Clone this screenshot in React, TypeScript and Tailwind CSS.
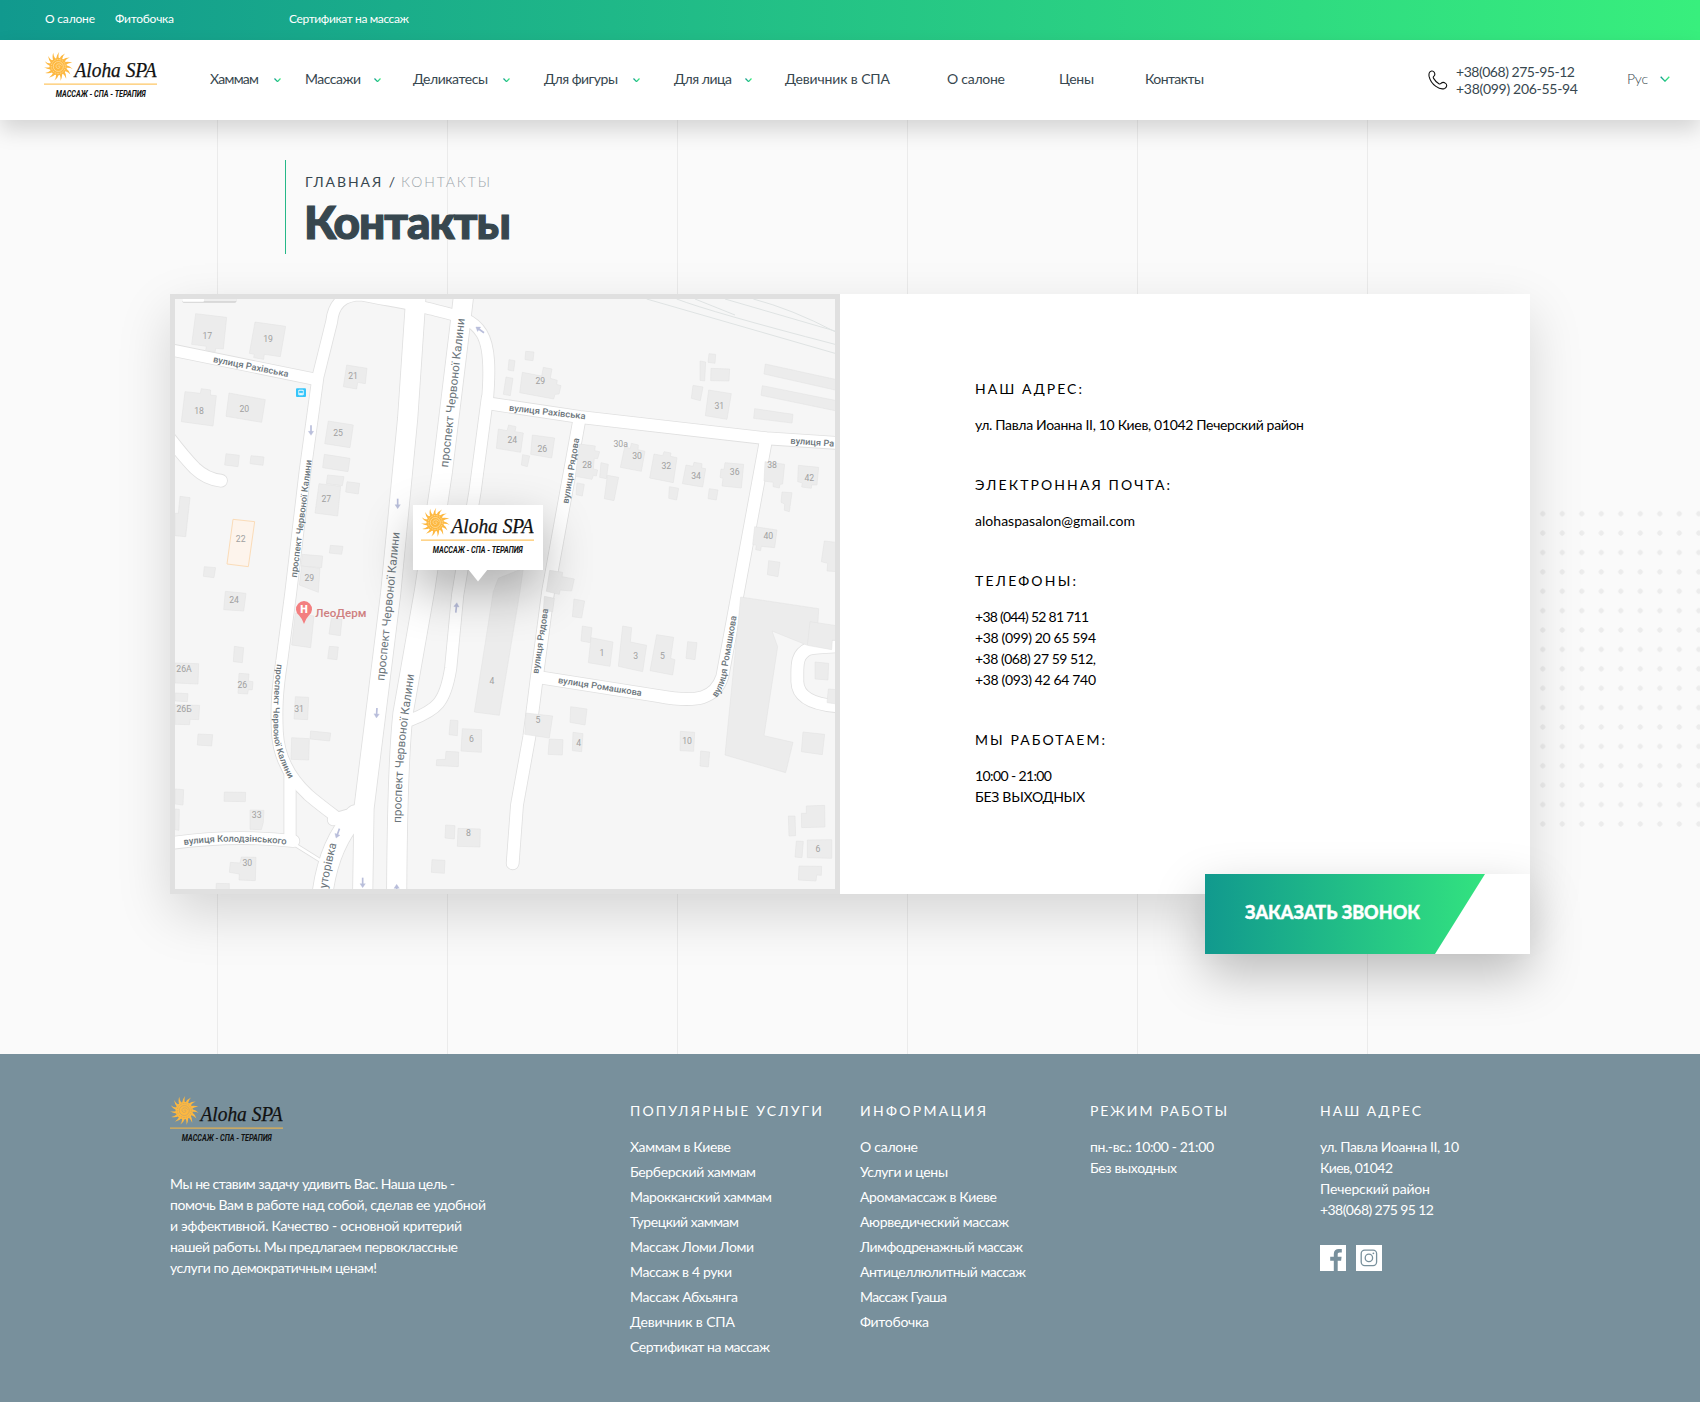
import { useLayoutEffect, useRef, useState } from "react";

/* Text set to a given measure: the tracking is computed from the natural width. */
function Fit({ w, children, className = "" }: { w: number; children: string; className?: string }) {
  const ref = useRef<HTMLSpanElement>(null);
  const [tracking, setTracking] = useState(0);
  useLayoutEffect(() => {
    const el = ref.current;
    if (!el) return;
    const natural = el.getBoundingClientRect().width - tracking * children.length;
    setTracking((w - natural) / Math.max(1, children.length - 1));
  }, [w, children]);
  return (
    <span className={`inline-block whitespace-nowrap ${className}`} style={{ width: w }}>
      <span ref={ref} style={{ letterSpacing: tracking }}>
        {children}
      </span>
    </span>
  );
}

function sunRays() {
  const n = 15;
  const pt = (r: number, a: number) =>
    `${(14.3 + r * Math.cos(a)).toFixed(2)} ${(14.5 + r * Math.sin(a)).toFixed(2)}`;
  let d = "";
  for (let i = 0; i < n; i++) {
    const a = (i / n) * Math.PI * 2;
    const s = (Math.PI * 2) / n;
    d += `M${pt(8.2, a - s * 0.38)}Q${pt(11.4, a - s * 0.16)} ${pt(14.6, a + s * 0.4)}Q${pt(11.4, a + s * 0.2)} ${pt(8.2, a + s * 0.38)}Z`;
  }
  return d;
}
const RAYS = sunRays();

function Logo({ etch = "#ffe2ab" }: { etch?: string }) {
  return (
    <svg width="113" height="50" viewBox="0 0 113 50" className="block shrink-0">
      <path d={RAYS} fill="#fdb840" />
      <circle cx="14.3" cy="14.5" r="8.7" fill="#fdb840" />
      <g fill="none" stroke={etch} strokeWidth="0.7">
        <circle cx="14.3" cy="14.5" r="7" strokeDasharray="1.6 1" />
        <circle cx="14.3" cy="14.5" r="5" />
        <path d="M14.3 14.5c0-1 1.5-.8 1.6.3.1 1.400-1.400 2-2.600 1.500-1.600-.7-1.700-2.900-.4-3.900 1.600-1.100 3.900-.6 4.700 1.200" />
      </g>
      <text x="30.500" y="25" textLength="82" lengthAdjust="spacingAndGlyphs" fill="#111" stroke="#111" strokeWidth="0.250" fontSize="20" fontStyle="italic" fontFamily="Liberation Serif, serif">
        Aloha SPA
      </text>
      <rect x="0" y="31.600" width="113" height="1" fill="#fdb840" />
      <text x="11.800" y="45" textLength="90" lengthAdjust="spacingAndGlyphs" fill="#111" fontSize="8.800" fontWeight="700" fontStyle="italic" fontFamily="Roboto, sans-serif">
        МАССАЖ - СПА - ТЕРАПИЯ
      </text>
    </svg>
  );
}

function Chevron({ size = 7, className = "" }: { size?: number; className?: string }) {
  return (
    <svg width={size} height={size * 0.62} viewBox="0 0 10 6.200" className={`block ${className}`}>
      <defs>
        <linearGradient id="chev" x1="0" x2="1" y1="0" y2="0">
          <stop offset="0" stopColor="#11998e" />
          <stop offset="1" stopColor="#38ef7d" />
        </linearGradient>
      </defs>
      <path d="M.7.7 5 5.200 9.300.7" fill="none" stroke="url(#chev)" strokeWidth={size > 8 ? 1.3 : 1.8} />
    </svg>
  );
}

const NAV = [
  { t: "Хаммам", w: 49, cell: "w-[95px]", gap: "ml-[15px]" },
  { t: "Массажи", w: 56, cell: "w-[108px]", gap: "ml-[13px]" },
  { t: "Деликатесы", w: 75, cell: "w-[131px]", gap: "ml-[15px]" },
  { t: "Для фигуры", w: 74, cell: "w-[130px]", gap: "ml-[15px]" },
  { t: "Для лица", w: 58, cell: "w-[111px]", gap: "ml-[13px]" },
  { t: "Девичник в СПА", w: 105, cell: "w-[162px]", gap: "" },
  { t: "О салоне", w: 58, cell: "w-[112px]", gap: "" },
  { t: "Цены", w: 35, cell: "w-[86px]", gap: "" },
  { t: "Контакты", w: 59, cell: "w-[60px]", gap: "" },
];

function TopBar() {
  return (
    <div className="flex h-10 bg-[linear-gradient(to_right,#11998e,#38ef7d)] pl-[45px] pt-[9px] text-[12px] leading-[20px] text-white">
      <Fit w={50}>О салоне</Fit>
      <Fit w={59} className="ml-5">Фитобочка</Fit>
      <Fit w={120} className="ml-[115px]">Сертификат на массаж</Fit>
    </div>
  );
}

function Header() {
  return (
    <header className="relative z-10 flex h-20 bg-white text-[14px] text-[#37474f] shadow-[0_10px_20px_rgba(0,0,0,0.15)]">
      <div className="w-[210px] pl-[44px] pt-3">
        <Logo />
      </div>
      <nav className="flex pt-7 leading-[21px]">
        {NAV.map((n) => (
          <div key={n.t} className={`flex h-[21px] items-center ${n.cell}`}>
            <Fit w={n.w}>{n.t}</Fit>
            {n.gap && <Chevron className={`mt-[3px] ${n.gap}`} />}
          </div>
        ))}
      </nav>
      <div className="ml-auto flex">
        <svg width="20" height="20" viewBox="0 0 20 20" className="mt-[30px]">
          <path
            d="M1.300 2.900C2.100.7 5 .2 6.200 2.200c.8 1.300.9 2.800-.3 3.900-.8.700-.8 1.400-.3 2.300 1.300 2.200 3 4 5.300 5.300.9.500 1.500.3 2.100-.3 1.200-1.200 2.900-1.300 4.300-.3 2.100 1.400 1.700 4.300-.6 5.300-2.500 1-5.600.3-8.800-2C4.300 13.800 1.900 10.300 1.100 6.400c-.2-1.200-.2-2.400.2-3.500Z"
            fill="none"
            stroke="#111"
            strokeWidth="1.100"
          />
        </svg>
        <div className="ml-2 mt-[23px] flex flex-col leading-[17px]">
          <Fit w={119}>+38(068) 275-95-12</Fit>
          <Fit w={122}>+38(099) 206-55-94</Fit>
        </div>
        <Fit w={21} className="ml-[49px] mt-7 font-light leading-[21px]">Рус</Fit>
        <Chevron size={10} className="ml-3 mr-[30px] mt-[36px]" />
      </div>
    </header>
  );
}

/* Roads as centre lines: [path, width] */
const ROADS: [string, number][] = [
  ["M20 195 452 283", 34],
  ["M967 350C975 260 975 185 950 145C920 95 860 88 780 68C720 52 660 45 590 30C530 30 505 60 500 110L459 275L420 560L377 925L350 1130C336 1220 334 1270 337 1340C340 1400 365 1470 430 1530C460 1556 490 1578 522 1602", 33],
  ["M375 1470V1664", 34],
  ["M20 1674Q210 1648 385 1668", 36],
  ["M385 1676 462 1724", 8],
  ["M505 1604Q540 1592 590 1580", 34],
  ["M572 1590Q490 1680 472 1830", 60],
  ["M753 30 728 400 677 925 597 1570 593 1830", 58],
  ["M896 30 883 140 832 560 779 915 714 1285Q697 1440 695 1830", 58],
  ["M967 340 930 620 878 930 857 1150Q845 1225 820 1255Q800 1280 735 1306", 34],
  ["M970 355 1245 396 1805 460 2020 474", 36],
  ["M1242 410 1150 915 1117 1165 1093 1355 1056 1560 1043 1735", 36],
  ["M1118 1176 1480 1233C1600 1255 1650 1240 1672 1175L1720 915 1802 470", 36],
  ["M2020 1084Q1950 1086 1930 1092C1890 1110 1898 1150 1897 1190C1898 1230 1930 1258 2020 1264", 36],
  ["M10 455Q60 520 90 550Q125 583 168 587", 36],
];

const BUILDINGS = [
  "92,86 185,97 175,192 152,190 150,202 122,196 124,184 80,178",
  "270,111 362,124 346,215 298,208 296,223 266,218 268,208 253,205",
  "545,240 606,250 601,296 578,292 575,312 535,305",
  "60,320 106,325 109,311 137,315 136,330 154,332 144,423 49,410",
  "192,324 301,344 290,412 183,394",
  "490,408 565,420 555,488 479,476",
  "478,508 555,520 549,560 473,548",
  "488,570 537,575 532,602 484,596",
  "462,596 527,604 518,693 450,684",
  "546,590 584,595 580,627 542,621",
  "183,506 223,511 219,545 179,540",
  "258,512 297,516 294,541 255,536",
  "45,634 75,638 62,755 30,752 30,685 40,685",
  "118,845 152,848 147,878 115,874",
  "496,781 534,784 530,808 493,804",
  "412,808 473,813 470,848 408,843",
  "410,843 465,850 460,922 403,900",
  "1000,432 1026,437 1031,420 1053,425 1050,440 1075,444 1067,502 994,490",
  "1082,199 1107,201 1104,227 1080,224",
  "1032,224 1050,227 1046,258 1029,255",
  "1023,276 1044,280 1036,332 1015,328",
  "1072,262 1130,273 1135,247 1161,252 1156,280 1177,286 1175,298 1188,302 1182,327 1170,328 1166,342 1064,323",
  "1102,450 1169,459 1160,519 1097,508",
  "1073,509 1094,513 1087,545 1069,540",
  "1243,477 1291,483 1289,497 1304,500 1298,521 1288,520 1285,552 1298,555 1294,573 1285,571 1281,583 1231,574",
  "1308,533 1330,538 1324,581 1304,577",
  "1327,571 1361,577 1347,647 1318,641",
  "1236,594 1258,598 1252,633 1233,629",
  "1379,486 1396,490 1399,475 1420,480 1419,494 1440,499 1429,559 1366,547",
  "1467,507 1493,512 1497,500 1518,504 1516,514 1536,518 1525,593 1454,579",
  "1563,540 1584,544 1587,532 1611,536 1610,549 1622,551 1613,606 1552,596",
  "1680,533 1736,538 1729,609 1671,603 1674,580 1665,577 1668,552 1677,553",
  "1513,605 1541,610 1535,645 1511,640",
  "1633,611 1659,615 1654,645 1629,641",
  "1632,206 1652,208 1650,235 1629,232",
  "1605,228 1622,231 1619,288 1605,286",
  "1638,250 1694,252 1692,288 1637,287",
  "1584,301 1614,306 1606,347 1579,340",
  "1631,315 1699,326 1686,403 1621,392",
  "1801,237 2015,284 2015,316 1797,267",
  "1792,302 2015,347 2015,378 1788,331",
  "1769,371 1884,388 1881,414 1766,400",
  "1800,530 1859,538 1853,597 1845,598 1843,609 1824,605 1825,592 1797,588",
  "1900,541 1961,547 1956,600 1940,600 1939,610 1910,606 1912,594 1898,590",
  "1851,621 1881,623 1875,665 1873,680 1858,676 1859,657 1848,652",
  "1769,725 1836,735 1829,788 1789,784 1787,797 1772,794 1774,781 1763,778",
  "1811,827 1845,832 1839,875 1807,869",
  "1978,768 2015,772 2015,860 1986,858 1988,835 1969,830",
  "1154,856 1193,862 1191,875 1228,882 1220,918 1185,915 1183,928 1144,919",
  "181,919 243,925 236,978 176,974",
  "208,1084 236,1088 232,1133 205,1130",
  "30,1134 101,1136 99,1197 30,1194",
  "30,1224 69,1226 67,1250 30,1248",
  "30,1259 104,1261 101,1304 75,1303 74,1319 30,1318",
  "222,1165 252,1167 250,1188 264,1190 262,1214 250,1214 248,1227 219,1225",
  "99,1347 143,1349 140,1383 97,1380",
  "391,985 447,993 437,1088 380,1080",
  "499,1000 531,1003 526,1052 492,1047",
  "493,1084 520,1086 516,1124 488,1121",
  "391,1235 431,1237 428,1304 387,1302",
  "437,1338 497,1344 494,1368 435,1362",
  "380,1358 433,1361 431,1425 378,1423",
  "30,1512 56,1514 54,1560 30,1557",
  "30,1572 43,1573 42,1636 30,1634",
  "178,1521 242,1522 241,1550 177,1549",
  "255,1575 297,1576 295,1612 289,1634 255,1633",
  "196,1732 225,1734 229,1716 273,1717 271,1787 222,1785 223,1767 193,1762",
  "154,1795 193,1796 193,1815 153,1815",
  "856,1305 879,1307 877,1352 852,1349",
  "892,1331 950,1334 949,1402 888,1398",
  "843,1399 881,1401 880,1445 840,1443 814,1442 815,1424 841,1423",
  "842,1620 870,1622 868,1662 840,1659",
  "879,1630 946,1632 945,1686 877,1684",
  "801,1724 840,1726 838,1765 799,1762",
  "1000,880 1075,850 1064,925 1003,1291 928,1281 985,920",
  "1138,934 1168,940 1163,980 1135,976",
  "1227,942 1259,948 1250,999 1222,995",
  "1252,1023 1281,1028 1276,1073 1248,1068",
  "1278,1058 1344,1071 1335,1144 1270,1133",
  "1373,1023 1400,1028 1396,1071 1445,1081 1433,1160 1360,1144",
  "1475,1049 1526,1057 1517,1120 1530,1124 1523,1170 1455,1157",
  "1568,1070 1596,1073 1590,1124 1563,1120",
  "1083,1284 1163,1293 1153,1359 1079,1348",
  "1217,1265 1266,1272 1260,1320 1215,1312",
  "1224,1342 1254,1346 1250,1400 1222,1397",
  "1153,1362 1194,1364 1192,1410 1149,1408",
  "1546,1339 1589,1342 1586,1399 1545,1397",
  "1607,1398 1634,1401 1630,1446 1605,1443",
  "1727,936 1961,971 1956,1062 1925,1080 1821,1038 1838,1085 1797,1352 1884,1372 1862,1463 1680,1410",
  "1935,1010 2015,1022 2015,1066 2002,1065 2000,1094 1927,1081",
  "1950,1131 1991,1135 1989,1185 1950,1182",
  "1990,1212 2015,1214 2015,1257 1986,1253",
  "1914,1341 1979,1348 1972,1409 1909,1400",
  "1924,1563 1979,1561 1980,1626 1910,1628 1909,1585 1924,1585",
  "1870,1593 1890,1593 1892,1652 1872,1653",
  "1894,1668 1915,1669 1911,1718 1890,1716",
  "1927,1665 2000,1664 2000,1720 1927,1718",
  "1902,1743 1970,1744 1969,1771 1955,1770 1953,1788 1900,1785",
];

const NUMBERS: [number, number, string][] = [
  [127, 162, "17"], [309, 170, "19"], [564, 282, "21"], [102, 387, "18"], [238, 382, "20"],
  [519, 452, "25"], [484, 650, "27"], [227, 770, "22"], [433, 887, "29"], [1042, 473, "24"],
  [1126, 298, "29"], [1132, 502, "26"], [1266, 549, "28"], [1367, 487, "30a"], [1416, 523, "30"],
  [1504, 552, "32"], [1593, 583, "34"], [1709, 570, "36"], [1821, 548, "38"], [1933, 587, "42"],
  [1663, 371, "31"], [1810, 762, "40"], [207, 953, "24"], [57, 1160, "26A"], [57, 1282, "26Б"],
  [232, 1210, "26"], [402, 1281, "31"], [275, 1600, "33"], [247, 1744, "30"], [981, 1197, "4"],
  [919, 1372, "6"], [910, 1653, "8"], [1311, 1113, "1"], [1412, 1122, "3"], [1492, 1122, "5"],
  [1119, 1315, "5"], [1241, 1384, "4"], [1566, 1377, "10"], [1959, 1700, "6"],
];

const ARROWS: [number, number, number][] = [
  [438, 437, 0], [698, 657, 0], [635, 1285, 3], [518, 1646, 20], [593, 1794, 0],
  [874, 967, 186], [695, 1812, 180], [944, 134, 125],
];

function StreetMap() {
  return (
    <svg viewBox="30 42 1980 1770" className="block h-[590px] w-[660px]" fontFamily="Roboto, sans-serif">
      <rect x="30" y="42" width="1980" height="1770" fill="#f6f6f6" />
      <g fill="none" stroke="#dfe3e3" strokeWidth="3">
        <path d="M1445 42 2010 205M1535 42Q1640 82 2010 178M1590 42 1710 90M1680 42 2010 138M1765 42Q1880 72 2010 140" />
      </g>
      <g fill="none" stroke="#e0e0e0" strokeLinecap="round" strokeLinejoin="round">
        {ROADS.map(([d, w]) => <path key={d} d={d} strokeWidth={w + 5} />)}
      </g>
      <g fill="none" stroke="#fff" strokeLinecap="round" strokeLinejoin="round">
        {ROADS.map(([d, w]) => <path key={d} d={d} strokeWidth={w} />)}
      </g>
      <g fill="#ececec" stroke="#e0e0e0" strokeWidth="1.500">
        {BUILDINGS.map((p) => <polygon key={p} points={p} />)}
      </g>
      <polygon points="204,703 269,710 250,845 186,837" fill="#fdf4ec" stroke="#fbdcb8" strokeWidth="3" />
      <rect x="52" y="38" width="162" height="15" rx="4" fill="#d2d2d2" />
      <rect x="52" y="36" width="162" height="13" rx="3" fill="#efefef" />
      <rect x="52" y="36" width="65" height="14" rx="3" fill="#fff" />
      <g fill="#a0a0a0" fontSize="26" textAnchor="middle">
        {NUMBERS.map(([x, y, t]) => <text key={`${x}-${y}`} x={x} y={y}>{t}</text>)}
      </g>
      <g stroke="#b9bedb" strokeWidth="5" fill="#b9bedb">
        {ARROWS.map(([x, y, r]) => (
          <g key={`${x}-${y}`} transform={`translate(${x} ${y}) rotate(${r})`}>
            <path d="M0-16V6" />
            <path d="M-8 2H8L0 14Z" strokeWidth="1" />
          </g>
        ))}
      </g>
      <g fill="#6b757b" fontSize="27" fontWeight="500">
        <text transform="translate(143 231) rotate(11.300)" textLength="230" lengthAdjust="spacingAndGlyphs">вулиця Рахівська</text>
        <text transform="translate(1031 377) rotate(6.400)" textLength="231" lengthAdjust="spacingAndGlyphs">вулиця Рахівська</text>
        <text transform="translate(1876 476) rotate(4)" textLength="131" lengthAdjust="spacingAndGlyphs">вулиця Ра</text>
        <text transform="translate(395 878) rotate(-82.700)" textLength="355" lengthAdjust="spacingAndGlyphs">проспект Червоної Калини</text>
        <text transform="translate(1210 657) rotate(-80.500)" textLength="199" lengthAdjust="spacingAndGlyphs">вулиця Рядова</text>
        <text transform="translate(1120 1167) rotate(-81.300)" textLength="197" lengthAdjust="spacingAndGlyphs">вулиця Рядова</text>
        <text transform="translate(1178 1194) rotate(8.800)" textLength="254" lengthAdjust="spacingAndGlyphs">вулиця Ромашкова</text>
        <path id="kol" d="M57 1680Q210 1660 365 1679" fill="none" />
        <text fontSize="28"><textPath href="#kol" textLength="308" lengthAdjust="spacingAndGlyphs">вулиця Колодзінського</textPath></text>
        <path id="rom" d="M1654 1238Q1680 1205 1686 1160L1717 984" fill="none" />
        <text fontSize="28"><textPath href="#rom" textLength="254" lengthAdjust="spacingAndGlyphs">вулиця Ромашкова</textPath></text>
        <path id="cher" d="M336 1137Q322 1250 326 1350Q332 1410 375 1488" fill="none" />
        <text fontSize="26"><textPath href="#cher" textLength="354" lengthAdjust="spacingAndGlyphs">проспект Червоної Калини</textPath></text>
      </g>
      <g fill="#6b757b" fontSize="35">
        <text transform="translate(849 548) rotate(-83.600)" textLength="450" lengthAdjust="spacingAndGlyphs">проспект Червоної Калини</text>
        <text transform="translate(658 1188) rotate(-84.100)" textLength="448" lengthAdjust="spacingAndGlyphs">проспект Червоної Калини</text>
        <path id="cher2" d="M708 1614Q712 1440 724 1340Q735 1260 748 1164" fill="none" />
        <text><textPath href="#cher2" textLength="448" lengthAdjust="spacingAndGlyphs">проспект Червоної Калини</textPath></text>
        <path id="hut" d="M486 1811Q494 1755 517 1670" fill="none" />
        <text><textPath href="#hut" textLength="138" lengthAdjust="spacingAndGlyphs">уторівка</textPath></text>
      </g>
      <rect x="393" y="310" width="30" height="26" rx="3" fill="#35c5fa" />
      <rect x="400" y="314" width="16" height="17" rx="3" fill="#fff" />
      <path d="M403 318H413V323H403ZM403 327H406M410 327H413" fill="#35c5fa" stroke="#35c5fa" strokeWidth="2" />
      <path d="M417 1017Q413 1003 402 991A24 24 0 1 1 432 991Q421 1003 417 1017Z" fill="#f37f80" />
      <text x="417" y="985" fill="#fff" fontSize="32" fontWeight="900" textAnchor="middle">H</text>
      <text x="451" y="996" fill="#cf7f80" fontSize="33" fontWeight="500" textLength="153" lengthAdjust="spacingAndGlyphs">ЛеоДерм</text>
    </svg>
  );
}

function MapCard() {
  return (
    <div className="relative h-[600px] w-[670px] shrink-0 overflow-hidden border-[5px] border-[#e0e0e0]">
      <StreetMap />
      <div className="absolute left-[238px] top-[206px] h-[65px] w-[130px] bg-white pl-2 pt-[3px] shadow-[0_20px_50px_rgba(0,0,0,0.3)]">
        <Logo />
        <svg width="20" height="13" viewBox="0 0 20 13" className="absolute left-[55px] top-[64px]">
          <path d="M0 0H20L10 12.500Z" fill="#fff" />
        </svg>
      </div>
    </div>
  );
}

const CONTACTS = [
  { h: "НАШ АДРЕС:", hw: 107, lines: [["ул. Павла Иоанна II, 10 Киев, 01042 Печерский район", 329]] },
  { h: "ЭЛЕКТРОННАЯ ПОЧТА:", hw: 195, lines: [["alohaspasalon@gmail.com", 160]] },
  { h: "ТЕЛЕФОНЫ:", hw: 101, lines: [["+38 (044) 52 81 711", 114], ["+38 (099) 20 65 594", 121], ["+38 (068) 27 59 512,", 121], ["+38 (093) 42 64 740", 121]] },
  { h: "МЫ РАБОТАЕМ:", hw: 130, lines: [["10:00 - 21:00", 77], ["БЕЗ ВЫХОДНЫХ", 110]] },
] as { h: string; hw: number; lines: [string, number][] }[];

function Main() {
  return (
    <main className="relative h-[934px] bg-[#fafafa] pt-10">
      <div className="absolute bottom-0 left-[217px] top-0 w-[1380px] bg-[linear-gradient(to_right,#ebebeb_1px,transparent_1px)] bg-[length:230px_100%]" />
      <div className="absolute left-[1533px] top-[384px] h-[330px] w-[167px] bg-[radial-gradient(circle,#ececec_2.3px,transparent_2.9px)] bg-[length:19.5px_19.4px]" />
      <div className="relative ml-[285px] flex h-[94px] flex-col border-l border-[#26b888] pl-[19px] pt-[11px]">
        <div className="flex text-[14px] leading-[21px] text-[#37474f]">
          <Fit w={90}>ГЛАВНАЯ /</Fit>
          <Fit w={89} className="ml-[6px] font-light text-[#9aa5ab]">КОНТАКТЫ</Fit>
        </div>
        <h1 className="mt-[6px] text-[46px] font-black leading-[48px] text-[#37474f] [-webkit-text-stroke:1.2px_#37474f]">
          <Fit w={207} className="-ml-px">Контакты</Fit>
        </h1>
      </div>
      <section className="relative ml-[170px] mt-10 flex h-[600px] w-[1360px] bg-white shadow-[0_20px_50px_rgba(0,0,0,0.15)]">
        <MapCard />
        <div className="flex-1 pl-[135px] pt-[84px] text-[14px] leading-[21px] text-black">
          {CONTACTS.map((c) => (
            <div key={c.h} className="mb-[39px]">
              <Fit w={c.hw} className="mb-[15px] block">{c.h}</Fit>
              {c.lines.map(([t, w]) => (
                <div key={t} className="h-[21px]"><Fit w={w}>{t}</Fit></div>
              ))}
            </div>
          ))}
        </div>
        <div className="absolute -bottom-[60px] right-0 h-20 w-[325px] bg-white shadow-[0_20px_50px_rgba(0,0,0,0.25)]">
          <button className="block h-20 w-[325px] bg-[linear-gradient(to_right,#11998e,#38ef7d)] pb-[4px] pl-10 text-left text-[18px] font-black leading-[76px] text-white [-webkit-text-stroke:0.4px_#fff] [clip-path:polygon(0_0,280px_0,230px_100%,0_100%)]">
            <Fit w={175}>ЗАКАЗАТЬ ЗВОНОК</Fit>
          </button>
        </div>
      </section>
    </main>
  );
}

const ABOUT: [string, number][] = [
  ["Мы не ставим задачу удивить Вас. Наша цель -", 285],
  ["помочь Вам в работе над собой, сделав ее удобной", 316],
  ["и эффективной. Качество - основной критерий", 292],
  ["нашей работы. Мы предлагаем первоклассные", 288],
  ["услуги по демократичным ценам!", 207],
];
const SERVICES: [string, number][] = [
  ["Хаммам в Киеве", 101], ["Берберский хаммам", 126], ["Марокканский хаммам", 142],
  ["Турецкий хаммам", 109], ["Массаж Ломи Ломи", 124], ["Массаж в 4 руки", 102],
  ["Массаж Абхьянга", 108], ["Девичник в СПА", 105], ["Сертификат на массаж", 140],
];
const INFO: [string, number][] = [
  ["О салоне", 58], ["Услуги и цены", 88], ["Аромамассаж в Киеве", 137], ["Аюрведический массаж", 149],
  ["Лимфодренажный массаж", 163], ["Антицеллюлитный массаж", 166], ["Массаж Гуаша", 87], ["Фитобочка", 69],
];

function FooterColumn({ title, tw, items, tight }: { title: string; tw: number; items: [string, number][]; tight?: boolean }) {
  return (
    <div>
      <Fit w={tw} className="leading-[21px]">{title}</Fit>
      <ul className={tight ? "mt-[15px] leading-[21px]" : "mt-[13px] leading-[25px]"}>
        {items.map(([t, w]) => (
          <li key={t} className={tight ? "h-[21px]" : "h-[25px]"}><Fit w={w}>{t}</Fit></li>
        ))}
      </ul>
    </div>
  );
}

function Footer() {
  return (
    <footer className="flex h-[348px] bg-[#78909c] pl-[170px] text-[14px] text-white">
      <div className="w-[460px] pt-[42px]">
        <Logo etch="#c4a468" />
        <div className="mt-[27px] leading-[21px]">
          {ABOUT.map(([t, w]) => <div key={t} className="h-[21px]"><Fit w={w}>{t}</Fit></div>)}
        </div>
      </div>
      <div className="grid grid-cols-[230px_230px_230px_230px] items-start pt-[46px]">
        <FooterColumn title="ПОПУЛЯРНЫЕ УСЛУГИ" tw={192} items={SERVICES} />
        <FooterColumn title="ИНФОРМАЦИЯ" tw={126} items={INFO} />
        <FooterColumn title="РЕЖИМ РАБОТЫ" tw={137} items={[["пн.-вс.: 10:00 - 21:00", 124], ["Без выходных", 87]]} tight />
        <div>
          <FooterColumn
            title="НАШ АДРЕС"
            tw={101}
            items={[["ул. Павла Иоанна II, 10", 139], ["Киев, 01042", 73], ["Печерский район", 110], ["+38(068) 275 95 12", 114]]}
            tight
          />
          <div className="mt-[25px] flex gap-[10px]">
            <svg width="26" height="26" viewBox="0 0 26 26">
              <rect width="26" height="26" fill="#fff" />
              <path d="M13.800 26V15.700H10.200V11.800H13.800V9C13.800 5.700 15.800 4 18.700 4H21.800V7.500H19.600C18.200 7.500 17.700 8.200 17.700 9.400V11.800H21.600L21.100 15.700H17.700V26Z" fill="#78909c" />
            </svg>
            <svg width="26" height="26" viewBox="0 0 26 26">
              <rect width="26" height="26" fill="#fff" />
              <rect x="5.200" y="5.200" width="15.400" height="15.400" rx="3.500" fill="none" stroke="#78909c" strokeWidth="1.300" />
              <circle cx="12.900" cy="12.900" r="3.700" fill="none" stroke="#78909c" strokeWidth="1.300" />
              <circle cx="17.400" cy="8.300" r="0.900" fill="#78909c" />
            </svg>
          </div>
        </div>
      </div>
    </footer>
  );
}

export default function App() {
  return (
    <div className="w-[1700px] overflow-hidden font-[Lato,'Open_Sans',sans-serif]">
      <TopBar />
      <Header />
      <Main />
      <Footer />
    </div>
  );
}
